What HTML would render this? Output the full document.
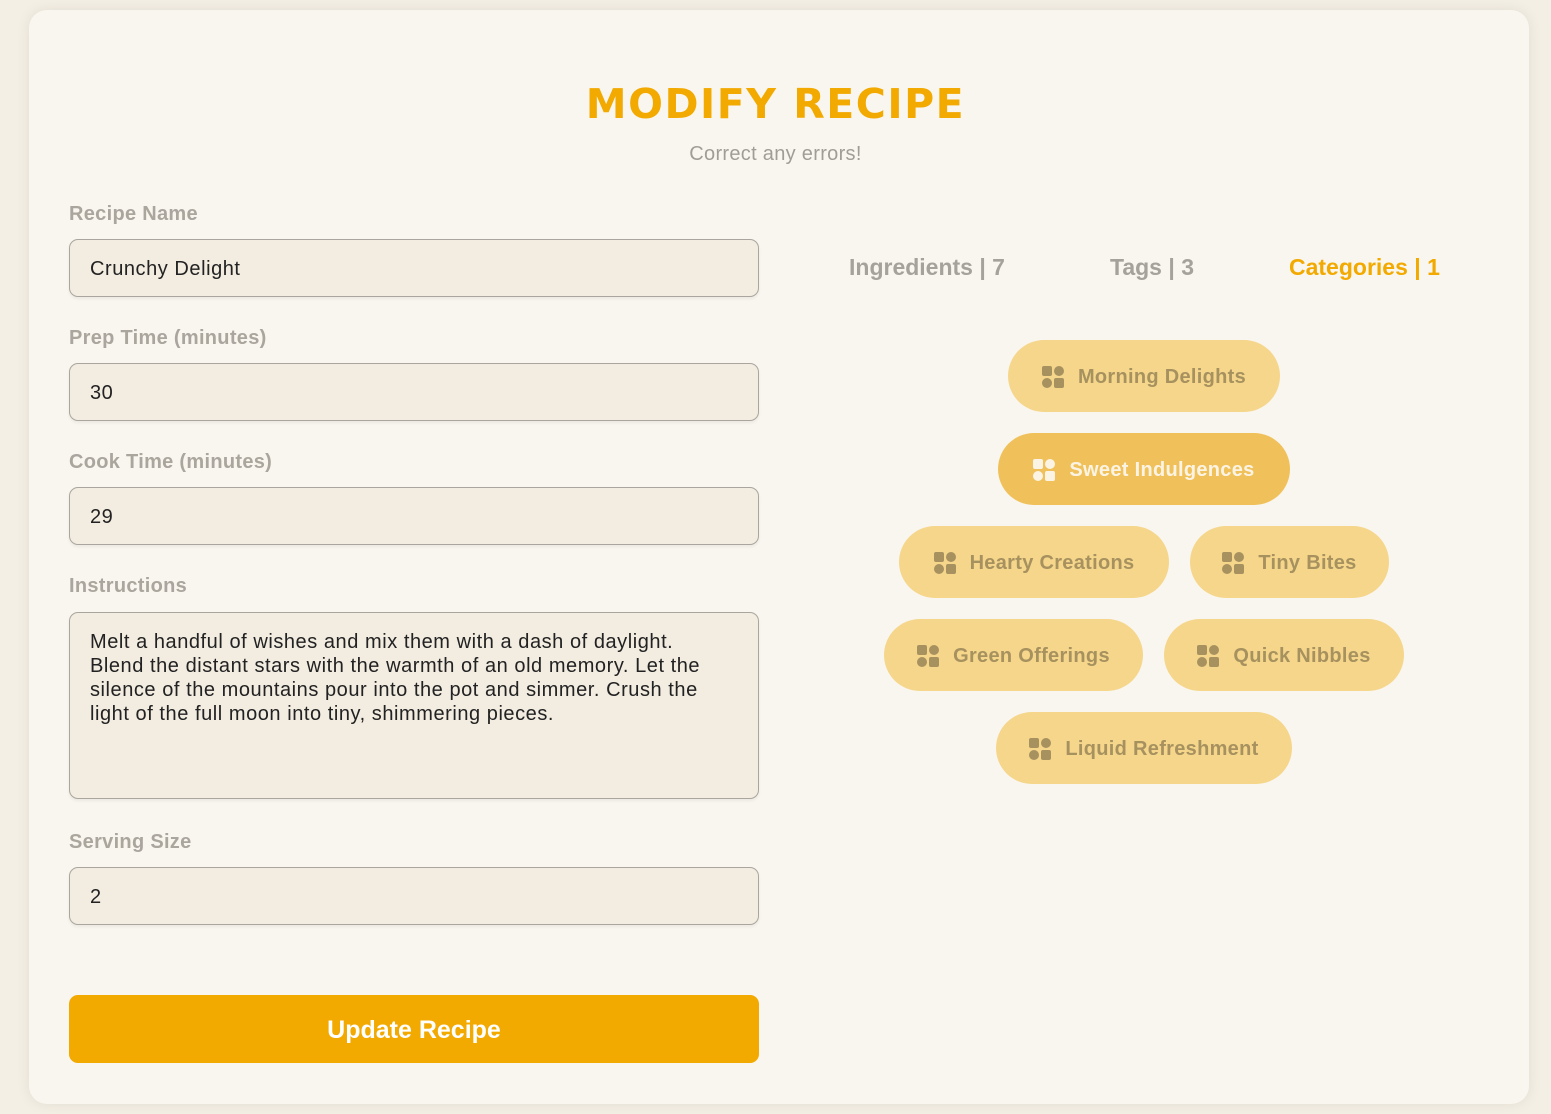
<!DOCTYPE html>
<html><head><meta charset="utf-8"><style>
*{box-sizing:border-box;margin:0;padding:0}
body{width:1551px;height:1114px;background:#f4efe4;font-family:"Liberation Sans",sans-serif;position:relative;overflow:hidden}
.card{position:absolute;left:29px;top:10px;width:1500px;height:1094px;background:#f9f6ef;border-radius:18px;box-shadow:0 0 14px rgba(0,0,0,.08)}
.title{position:absolute;left:0;width:1551px;top:80px;text-align:center;color:#f2a900;font-family:"DejaVu Sans","Liberation Sans",sans-serif;font-weight:bold;font-size:41px;letter-spacing:1.5px}
.sub{position:absolute;left:0;width:1551px;top:143px;text-align:center;color:#a09c96;font-size:20px;letter-spacing:.3px}
.lbl{position:absolute;left:69px;color:#aaa59d;font-weight:bold;font-size:20px;letter-spacing:.3px;margin-top:2px}
.inp{position:absolute;left:69px;width:690px;height:58px;background:#f2ece1;border:1px solid #aaa69f;border-radius:9px;padding:0 20px;font-size:20px;color:#222;line-height:58px;letter-spacing:.55px;box-shadow:0 2px 3px rgba(0,0,0,.06)}
.ta{height:187px;line-height:24px;padding-top:17px;padding-right:40px}
.btn{position:absolute;left:69px;top:995px;width:690px;height:68px;background:#f2a900;border-radius:9px;color:#fff;font-weight:bold;font-size:25px;text-align:center;line-height:70px}
.tab{position:absolute;top:254px;font-weight:bold;font-size:23px;color:#a5a19b}
.chip{position:absolute;height:72px;border-radius:36px;background:#f5d68b;color:#a6915f;font-weight:bold;font-size:20px;display:flex;align-items:center;justify-content:center;gap:14px;letter-spacing:.3px;padding-top:2px}
.chip.sel{background:#f0c15a;color:#fbf4e4}
.ic{width:22px;height:22px;position:relative}
.ic i{position:absolute;width:10px;height:10px;background:currentColor}
.ic i:nth-child(1){left:0;top:0;border-radius:2px}
.ic i:nth-child(2){right:0;top:0;border-radius:50%}
.ic i:nth-child(3){left:0;bottom:0;border-radius:50%}
.ic i:nth-child(4){right:0;bottom:0;border-radius:2px}
</style></head><body>
<div class="card"></div>
<div class="title">MODIFY RECIPE</div>
<div class="sub">Correct any errors!</div>
<div class="lbl" style="top:201px">Recipe Name</div>
<div class="inp" style="top:239px">Crunchy Delight</div>
<div class="lbl" style="top:325px">Prep Time (minutes)</div>
<div class="inp" style="top:363px">30</div>
<div class="lbl" style="top:449px">Cook Time (minutes)</div>
<div class="inp" style="top:487px">29</div>
<div class="lbl" style="top:573px">Instructions</div>
<div class="inp ta" style="top:612px">Melt a handful of wishes and mix them with a dash of daylight. Blend the distant stars with the warmth of an old memory. Let the silence of the mountains pour into the pot and simmer. Crush the light of the full moon into tiny, shimmering pieces.</div>
<div class="lbl" style="top:829px">Serving Size</div>
<div class="inp" style="top:867px">2</div>
<div class="btn">Update Recipe</div>
<div class="tab" style="left:849px">Ingredients | 7</div>
<div class="tab" style="left:1110px">Tags | 3</div>
<div class="tab" style="left:1289px;color:#f2a900">Categories | 1</div>
<div class="chip" style="left:1008px;top:340px;width:272px"><span class="ic"><i></i><i></i><i></i><i></i></span>Morning Delights</div>
<div class="chip sel" style="left:998px;top:433px;width:292px"><span class="ic"><i></i><i></i><i></i><i></i></span>Sweet Indulgences</div>
<div class="chip" style="left:899px;top:526px;width:270px"><span class="ic"><i></i><i></i><i></i><i></i></span>Hearty Creations</div>
<div class="chip" style="left:1190px;top:526px;width:199px"><span class="ic"><i></i><i></i><i></i><i></i></span>Tiny Bites</div>
<div class="chip" style="left:884px;top:619px;width:259px"><span class="ic"><i></i><i></i><i></i><i></i></span>Green Offerings</div>
<div class="chip" style="left:1164px;top:619px;width:240px"><span class="ic"><i></i><i></i><i></i><i></i></span>Quick Nibbles</div>
<div class="chip" style="left:996px;top:712px;width:296px"><span class="ic"><i></i><i></i><i></i><i></i></span>Liquid Refreshment</div>
</body></html>
